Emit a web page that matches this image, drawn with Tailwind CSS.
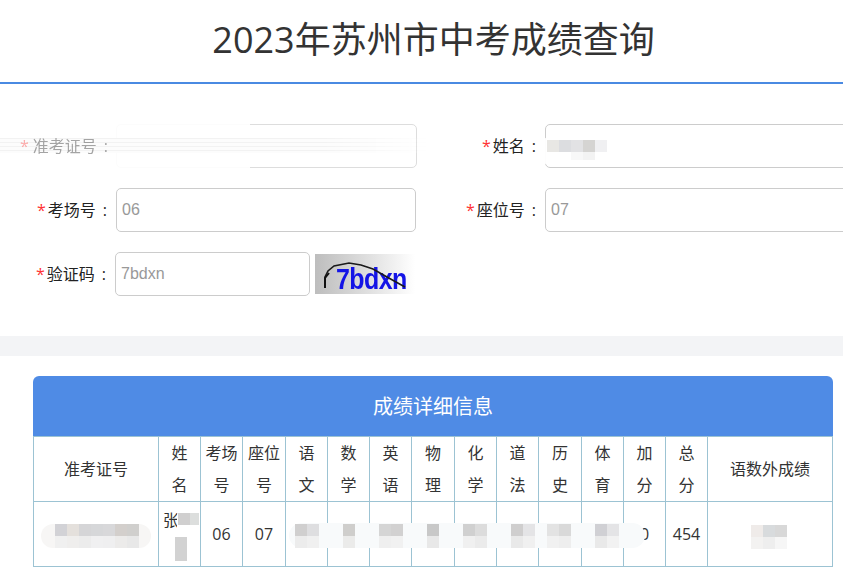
<!DOCTYPE html>
<html lang="zh-CN">
<head>
    <meta charset="UTF-8">
    <meta name="viewport" content="width=device-width, initial-scale=1.0">
    <title>2023年苏州市中考成绩查询</title>
    <script src="https://cdn.jsdelivr.net/npm/@tailwindcss/browser@4"></script>
</head>
<body class="bg-white h-[574px] overflow-hidden text-[#333] font-['Open_Sans','Noto_Sans_CJK_SC',sans-serif]">
    <h1 class="h-[84px] border-b-2 border-[#4a8ae2] pl-6 text-center text-[36px] leading-[80px] text-[#333]">2023年苏州市中考成绩查询</h1>

    <form class="relative pt-10 pb-10 flex flex-col gap-5 text-[16px] text-[#222]">
        <!-- row 1, partly blurred out in the source picture -->
        <div class="flex h-11 items-center">
            <label class="relative z-10 w-[116px] shrink-0 text-right pr-[8px] opacity-40"><span class="text-[#f33] mr-[4px]">*</span>准考证号<span class="ml-[7px]">:</span></label>
            <input class="w-[301px] shrink-0 h-11 border border-[#ddd] rounded-[5px] pl-[5px]" type="text">
            <label class="relative z-10 w-[128px] shrink-0 text-right pr-[9px]"><span class="text-[#f33] mr-[2px]">*</span>姓名<span class="ml-[7px]">:</span></label>
            <input class="w-[320px] shrink-0 h-11 border border-[#ccc] rounded-[5px] pl-[5px]" type="text">
        </div>
        <div class="flex h-11 items-center">
            <label class="w-[116px] shrink-0 text-right pr-[9px]"><span class="text-[#f33] mr-[2px]">*</span>考场号<span class="ml-[7px]">:</span></label>
            <input class="w-[300px] shrink-0 h-11 border border-[#ccc] rounded-[5px] pl-[5px] font-['Liberation_Sans',sans-serif] placeholder:text-[#999]" type="text" placeholder="06">
            <label class="w-[129px] shrink-0 text-right pr-[9px]"><span class="text-[#f33] mr-[2px]">*</span>座位号<span class="ml-[7px]">:</span></label>
            <input class="w-[320px] shrink-0 h-11 border border-[#ccc] rounded-[5px] pl-[5px] font-['Liberation_Sans',sans-serif] placeholder:text-[#999]" type="text" placeholder="07">
        </div>
        <div class="flex h-11 items-center">
            <label class="w-[115px] shrink-0 text-right pr-[9px]"><span class="text-[#f33] mr-[2px]">*</span>验证码<span class="ml-[7px]">:</span></label>
            <input class="w-[195px] shrink-0 h-11 border border-[#ccc] rounded-[5px] pl-[5px] font-['Liberation_Sans',sans-serif] placeholder:text-[#999]" type="text" placeholder="7bdxn">
            <div class="relative ml-[5px] w-[100px] h-10 overflow-hidden bg-linear-to-r from-[#bdbdbd] to-white">
                <span class="absolute left-[21px] top-[9px] origin-top scale-y-[1.15] text-[25px] leading-[28px] font-bold tracking-[-0.6px] text-[#1414e6] blur-[0.6px] font-['Liberation_Sans',sans-serif]">7bdxn</span>
                <svg class="absolute inset-0" width="100" height="40" viewBox="0 0 100 40" fill="none">
                    <path d="M10 34 L10 23 L13 17 L19 12 L34 9 L46 11 L58 15 L72 23 L90 33" stroke="#1a1a1a" stroke-width="1.6"/>
                    <path d="M10 34 L10 24 L14 19" stroke="#111" stroke-width="2"/>
                </svg>
            </div>
        </div>

        <!-- mosaic over 准考证号 -->
        <div class="absolute left-0 top-[32px] w-[250px] h-[52px] bg-white/90"></div>
        <div class="absolute left-0 top-[54px] w-[430px] h-[15px] bg-[repeating-linear-gradient(to_bottom,#f2f2f2_0,#f2f2f2_1px,#fcfcfc_1px,#fcfcfc_4px)] [mask-image:linear-gradient(to_right,black_75%,transparent)]"></div>

        <!-- mosaic over 姓名 -->
        <div class="absolute left-[538px] top-[52px] w-[74px] h-[30px] rounded-full bg-white/95"></div>
        <div class="absolute left-[547px] top-[56px] flex flex-col">
            <div class="flex">
                <span class="w-3 h-3 bg-[#e8e7e4]"></span><span class="w-3 h-3 bg-[#dcdde0]"></span><span class="w-3 h-3 bg-[#e2e2e4]"></span><span class="w-3 h-3 bg-[#d5d4d2]"></span><span class="w-3 h-3 bg-[#f0f0f2]"></span>
            </div>
            <div class="flex">
                <span class="w-3 h-2 bg-white"></span><span class="w-3 h-2 bg-white"></span><span class="w-3 h-2 bg-[#f8f8f8]"></span><span class="w-3 h-2 bg-[#f3f3f3]"></span><span class="w-3 h-2 bg-white"></span>
            </div>
        </div>
    </form>

    <div class="h-5 bg-[#f3f4f6]"></div>

    <section class="ml-[33px] w-[800px] mt-5">
        <h2 class="h-[60px] rounded-t-[6px] bg-[#4f8be5] text-center text-[20px] leading-[62px] text-white">成绩详细信息</h2>
        <div class="relative">
            <table class="w-[800px] table-fixed border-collapse text-center text-[16px] leading-[32px] text-[#333]">
                <colgroup>
                    <col class="w-[125px]"><col class="w-[42px]"><col class="w-[42px]"><col class="w-[43px]"><col class="w-[42px]"><col class="w-[42px]"><col class="w-[42px]"><col class="w-[43px]"><col class="w-[42px]"><col class="w-[42px]"><col class="w-[43px]"><col class="w-[42px]"><col class="w-[42px]"><col class="w-[42px]"><col class="w-[125px]">
                </colgroup>
                <thead>
                    <tr class="h-[65px]">
                        <th class="font-normal border border-[#9cc3d3] p-0">准考证号</th>
                        <th class="font-normal border border-[#9cc3d3] p-0 px-[10px]">姓名</th>
                        <th class="font-normal border border-[#9cc3d3] p-0">考场号</th>
                        <th class="font-normal border border-[#9cc3d3] p-0">座位号</th>
                        <th class="font-normal border border-[#9cc3d3] p-0 px-[10px]">语文</th>
                        <th class="font-normal border border-[#9cc3d3] p-0 px-[10px]">数学</th>
                        <th class="font-normal border border-[#9cc3d3] p-0 px-[10px]">英语</th>
                        <th class="font-normal border border-[#9cc3d3] p-0 px-[10px]">物理</th>
                        <th class="font-normal border border-[#9cc3d3] p-0 px-[10px]">化学</th>
                        <th class="font-normal border border-[#9cc3d3] p-0 px-[10px]">道法</th>
                        <th class="font-normal border border-[#9cc3d3] p-0 px-[10px]">历史</th>
                        <th class="font-normal border border-[#9cc3d3] p-0 px-[10px]">体育</th>
                        <th class="font-normal border border-[#9cc3d3] p-0 px-[10px]">加分</th>
                        <th class="font-normal border border-[#9cc3d3] p-0 px-[10px]">总分</th>
                        <th class="font-normal border border-[#9cc3d3] p-0">语数外成绩</th>
                    </tr>
                </thead>
                <tbody>
                    <tr class="h-[65px]">
                        <td class="border border-[#9cc3d3] p-0"></td>
                        <td class="border border-[#9cc3d3] p-0 text-left pl-[4px] align-top pt-[2px]">张</td>
                        <td class="border border-[#9cc3d3] p-0">06</td>
                        <td class="border border-[#9cc3d3] p-0">07</td>
                        <td class="border border-[#9cc3d3] p-0"></td>
                        <td class="border border-[#9cc3d3] p-0"></td>
                        <td class="border border-[#9cc3d3] p-0"></td>
                        <td class="border border-[#9cc3d3] p-0"></td>
                        <td class="border border-[#9cc3d3] p-0"></td>
                        <td class="border border-[#9cc3d3] p-0"></td>
                        <td class="border border-[#9cc3d3] p-0"></td>
                        <td class="border border-[#9cc3d3] p-0"></td>
                        <td class="border border-[#9cc3d3] p-0">0</td>
                        <td class="border border-[#9cc3d3] p-0">454</td>
                        <td class="border border-[#9cc3d3] p-0"></td>
                    </tr>
                </tbody>
            </table>

            <!-- mosaic: 准考证号 -->
            <div class="absolute left-[8px] top-[88px] w-[110px] h-[24px] rounded-full bg-[#f7f6f5] overflow-hidden flex flex-col pl-[14px]">
                <div class="flex">
                    <span class="w-3 h-3 bg-[#d2d2d6]"></span><span class="w-3 h-3 bg-[#e4e0dc]"></span><span class="w-3 h-3 bg-[#d5d5d7]"></span><span class="w-3 h-3 bg-[#d6d7d9]"></span><span class="w-3 h-3 bg-[#d8d8da]"></span><span class="w-3 h-3 bg-[#d3cfcc]"></span><span class="w-3 h-3 bg-[#d0cfcd]"></span>
                </div>
                <div class="flex">
                    <span class="w-3 h-3 bg-[#f0f0f0]"></span><span class="w-3 h-3 bg-[#efeeed]"></span><span class="w-3 h-3 bg-[#ececec]"></span><span class="w-3 h-3 bg-[#f0f0f1]"></span><span class="w-3 h-3 bg-[#efeff0]"></span><span class="w-3 h-3 bg-[#ecebea]"></span><span class="w-3 h-3 bg-[#e8e8e8]"></span>
                </div>
            </div>

            <!-- mosaic: 姓名 -->
            <div class="absolute left-[144px] top-[69px] w-[22px] h-[60px] rounded-t-full bg-white">
                <div class="flex ml-[1px] mt-[8px]">
                    <span class="w-3 h-[12px] shrink-0 bg-[#d0cfcf]"></span><span class="w-[9px] h-[12px] shrink-0 bg-[#dcdedd]"></span>
                </div>
                <div class="-ml-[2px] mt-[12px] w-3 h-6 bg-[#d2d2d2]"></div>
            </div>

            <!-- mosaic: 语文 to 加分 -->
            <div class="absolute left-[256px] top-[87px] w-[356px] h-[25px] rounded-full bg-[#f8fafb] flex flex-col pt-[1px] pl-[6px]">
                <div class="flex">
                    <span class="w-3 h-3 bg-[#d0cfcf]"></span><span class="w-3 h-3 bg-[#dedee0]"></span><span class="w-6 h-3"></span>
                    <span class="w-3 h-3 bg-[#cfcecc]"></span><span class="w-6 h-3"></span>
                    <span class="w-3 h-3 bg-[#d5d5d5]"></span><span class="w-3 h-3 bg-[#d2d1d1]"></span><span class="w-6 h-3"></span>
                    <span class="w-3 h-3 bg-[#c8c8c8]"></span><span class="w-6 h-3"></span>
                    <span class="w-3 h-3 bg-[#d0d0d0]"></span><span class="w-3 h-3 bg-[#dcdcdc]"></span><span class="w-6 h-3"></span>
                    <span class="w-3 h-3 bg-[#cfcece]"></span><span class="w-3 h-3 bg-[#e4e4e6]"></span><span class="w-3 h-3"></span>
                    <span class="w-3 h-3 bg-[#e3e3e3]"></span><span class="w-3 h-3 bg-[#d9d9d9]"></span><span class="w-6 h-3"></span>
                    <span class="w-3 h-3 bg-[#d0d0d4]"></span><span class="w-3 h-3 bg-[#e4e4e6]"></span>
                </div>
                <div class="flex">
                    <span class="w-3 h-3 bg-[#ececec]"></span><span class="w-3 h-3 bg-[#f0f0f0]"></span><span class="w-6 h-3"></span>
                    <span class="w-3 h-3 bg-[#ebebea]"></span><span class="w-6 h-3"></span>
                    <span class="w-3 h-3 bg-[#efefef]"></span><span class="w-3 h-3 bg-[#f1f1f1]"></span><span class="w-6 h-3"></span>
                    <span class="w-3 h-3 bg-[#e8e8e8]"></span><span class="w-6 h-3"></span>
                    <span class="w-3 h-3 bg-[#f0f0f0]"></span><span class="w-3 h-3 bg-[#ebebeb]"></span><span class="w-6 h-3"></span>
                    <span class="w-3 h-3 bg-[#e9e9e9]"></span><span class="w-3 h-3 bg-[#f0f0f0]"></span><span class="w-3 h-3"></span>
                    <span class="w-3 h-3 bg-[#f1f1f1]"></span><span class="w-3 h-3 bg-[#eeeeee]"></span><span class="w-6 h-3"></span>
                    <span class="w-3 h-3 bg-[#e9e9e9]"></span><span class="w-3 h-3 bg-[#f2f2f2]"></span>
                </div>
            </div>

            <!-- mosaic: 语数外成绩 -->
            <div class="absolute left-[718px] top-[89px] flex flex-col">
                <div class="flex">
                    <span class="w-3 h-3 bg-[#efebe9]"></span><span class="w-3 h-3 bg-[#d8dbdd]"></span><span class="w-3 h-3 bg-[#d8d8d8]"></span>
                </div>
                <div class="flex">
                    <span class="w-3 h-3 bg-[#f3f2f1]"></span><span class="w-3 h-3 bg-[#eeeeee]"></span><span class="w-3 h-3 bg-[#f6f6f6]"></span>
                </div>
            </div>
        </div>
    </section>
</body>
</html>
